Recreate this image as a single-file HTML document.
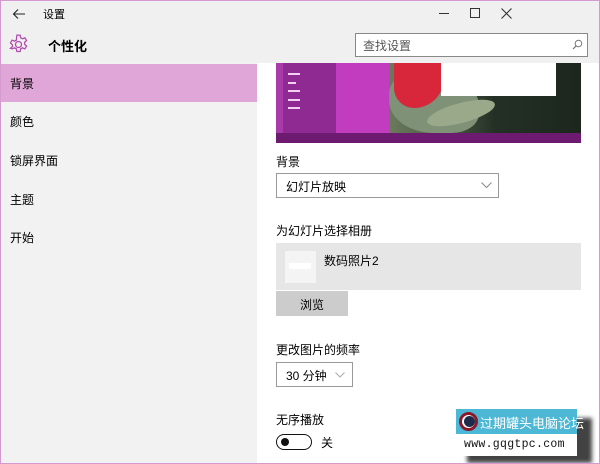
<!DOCTYPE html>
<html><head><meta charset="utf-8">
<style>
*{margin:0;padding:0;box-sizing:border-box}
body{width:600px;height:464px;overflow:hidden;background:#fff;font-family:"Liberation Sans","Noto Sans CJK SC",sans-serif;color:#000;position:relative}
.win{position:absolute;left:0;top:0;width:600px;height:464px;border:1px solid #d49ad0;overflow:hidden}
.a{position:absolute}
.t{font-size:12px;white-space:nowrap}
</style></head><body>
<div class="win">
  <div class="a" style="left:0;top:0;width:600px;height:62px;background:#f0f0f0"></div>
  <div class="a" style="left:0;top:62px;width:256px;height:402px;background:#f2f2f2"></div>
  <div class="a" style="left:0;top:63px;width:256px;height:38px;background:#e1a6d8"></div>
  <svg class="a" style="left:11px;top:7px" width="14" height="12" viewBox="0 0 14 12"><path d="M13 6H2M6 1.5L1.5 6 6 10.5" stroke="#222" stroke-width="1.1" fill="none"/></svg>
  <div class="a t" style="left:42px;top:5px;font-size:11px">设置</div>
  <div class="a" style="left:438px;top:12px;width:10px;height:1px;background:#333"></div>
  <div class="a" style="left:469px;top:7px;width:10px;height:10px;border:1px solid #333"></div>
  <svg class="a" style="left:500px;top:7px" width="11" height="11" viewBox="0 0 11 11"><path d="M.5 .5l10 10M10.5 .5l-10 10" stroke="#333" stroke-width="1.1"/></svg>
  <svg class="a" style="left:7px;top:33px" width="21" height="21" viewBox="0 0 18 18"><g fill="none" stroke="#b24cb0" stroke-width="1.1"><path d="M7.6 1h2.8l.4 2.2 1.6.9 2.1-.8 1.4 2.4-1.7 1.5v1.6l1.7 1.5-1.4 2.4-2.1-.8-1.6.9-.4 2.2H7.6l-.4-2.2-1.6-.9-2.1.8L2.1 12.3l1.7-1.5V9.2L2.1 7.7 3.5 5.3l2.1.8 1.6-.9z"/><circle cx="9" cy="9" r="2.6"/></g></svg>
  <div class="a t" style="left:47px;top:35px;font-weight:bold;font-size:13px">个性化</div>
  <div class="a" style="left:354px;top:32px;width:233px;height:24px;border:1px solid #888;background:#fff"></div>
  <div class="a t" style="left:362px;top:36px;color:#555;font-size:12px">查找设置</div>
  <svg class="a" style="left:571px;top:38px" width="11" height="11" viewBox="0 0 11 11"><circle cx="6.5" cy="4.5" r="3.3" fill="none" stroke="#777"/><path d="M4.2 6.8L1 10" stroke="#777" stroke-width="1.2"/></svg>
  <div class="a t" style="left:9px;top:74px">背景</div>
  <div class="a t" style="left:9px;top:112px">颜色</div>
  <div class="a t" style="left:9px;top:151px">锁屏界面</div>
  <div class="a t" style="left:9px;top:190px">主题</div>
  <div class="a t" style="left:9px;top:228px">开始</div>
  <div class="a" style="left:275px;top:62px;width:305px;height:80px;background:#1e2a20;overflow:hidden">
    <div class="a" style="left:0;top:0;width:113px;height:70px;background:#8e2a92"></div>
    <div class="a" style="left:0;top:0;width:7px;height:70px;background:#a83aaa"></div>
    <div class="a" style="left:60px;top:0;width:53px;height:70px;background:#c23cc0"></div>
    <div class="a" style="left:12px;top:10px;width:12px;height:2px;background:#f3d0f0"></div>
    <div class="a" style="left:12px;top:19px;width:8px;height:2px;background:#f3d0f0"></div>
    <div class="a" style="left:12px;top:27px;width:12px;height:2px;background:#f3d0f0"></div>
    <div class="a" style="left:12px;top:36px;width:12px;height:2px;background:#f3d0f0"></div>
    <div class="a" style="left:12px;top:44px;width:12px;height:2px;background:#f3d0f0"></div>
    <div class="a" style="left:113px;top:0;width:192px;height:70px;background:linear-gradient(90deg,#6b7a5c 0%,#4a5a44 30%,#243026 55%,#1c261c 100%)"></div>
    <div class="a" style="left:113px;top:5px;width:90px;height:65px;background:#7f9176;border-radius:40% 60% 30% 50%"></div>
    <div class="a" style="left:118px;top:0;width:50px;height:45px;background:#d8263a;border-radius:0 0 30px 20px"></div>
    <div class="a" style="left:150px;top:40px;width:70px;height:20px;background:#9aa98a;border-radius:50%;transform:rotate(-15deg)"></div>
    <div class="a" style="left:165px;top:0;width:115px;height:33px;background:#fff"></div>
    <div class="a" style="left:0;top:70px;width:305px;height:10px;background:#6c1b70"></div>
  </div>
  <div class="a t" style="left:275px;top:152px">背景</div>
  <div class="a" style="left:275px;top:172px;width:223px;height:25px;border:1px solid #999;background:#fff"></div>
  <div class="a t" style="left:285px;top:177px">幻灯片放映</div>
  <svg class="a" style="left:480px;top:181px" width="11" height="7" viewBox="0 0 11 7"><path d="M.5 .5l5 5 5-5" stroke="#888" fill="none"/></svg>
  <div class="a t" style="left:275px;top:221px">为幻灯片选择相册</div>
  <div class="a" style="left:275px;top:242px;width:305px;height:47px;background:#e6e6e6"></div>
  <div class="a" style="left:284px;top:250px;width:31px;height:32px;background:#f4f4f4"></div>
  <div class="a" style="left:288px;top:262px;width:22px;height:6px;background:#fff"></div>
  <div class="a t" style="left:323px;top:251px">数码照片2</div>
  <div class="a" style="left:275px;top:290px;width:72px;height:25px;background:#cccccc"></div>
  <div class="a t" style="left:299px;top:295px">浏览</div>
  <div class="a t" style="left:275px;top:340px">更改图片的频率</div>
  <div class="a" style="left:275px;top:361px;width:77px;height:25px;border:1px solid #999;background:#fff"></div>
  <div class="a t" style="left:285px;top:366px">30 分钟</div>
  <svg class="a" style="left:334px;top:371px" width="10" height="6" viewBox="0 0 10 6"><path d="M.5 .5l4.5 4.5 4.5-4.5" stroke="#aaa" fill="none"/></svg>
  <div class="a t" style="left:275px;top:410px">无序播放</div>
  <div class="a" style="left:275px;top:433px;width:36px;height:16px;border:1.5px solid #111;border-radius:8px"></div>
  <div class="a" style="left:280px;top:437px;width:8px;height:8px;background:#111;border-radius:50%"></div>
  <div class="a t" style="left:320px;top:433px">关</div>
  <div class="a" style="left:466px;top:417px;width:125px;height:45px;background:#222;filter:blur(2px);opacity:.85"></div>
  <div class="a" style="left:455px;top:408px;width:121px;height:25px;background:#4cb8d6"></div>
  <div class="a" style="left:455px;top:433px;width:121px;height:22px;background:#fff"></div>
  <div class="a" style="left:458px;top:411px;width:19px;height:19px;border-radius:50%;background:#fff;border:3px solid #8a1a2a"></div>
  <div class="a" style="left:463px;top:415px;width:11px;height:11px;border-radius:50%;background:#1e2a4a"></div>
  <div class="a t" style="left:479px;top:412px;color:#fff;font-size:13px">过期罐头电脑论坛</div>
  <div class="a t" style="left:463px;top:437px;font-family:'Liberation Mono',monospace;font-size:11.5px;letter-spacing:.3px;color:#111">www.gqgtpc.com</div>
</div>
</body></html>
